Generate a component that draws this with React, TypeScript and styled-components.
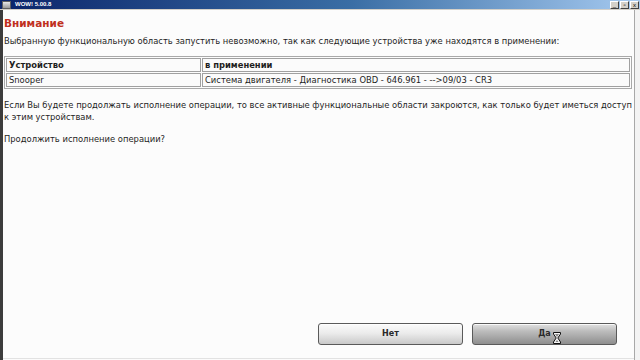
import React from "react";
import styled, { createGlobalStyle } from "styled-components";

const Global = createGlobalStyle`
  html, body { margin: 0; padding: 0; background: #fbfbfb; }
  body { font-family: "DejaVu Sans", Verdana, sans-serif; }
`;

const Window = styled.div`
  width: 640px;
  height: 360px;
  display: flex;
  flex-direction: column;
  overflow: hidden;
  position: relative;
  background: #fbfbfb;
`;

const TitleBar = styled.div`
  height: 9px;
  display: flex;
  align-items: center;
  background: linear-gradient(90deg, #0a246a 0%, #3a6ea5 55%, #a6caf0 100%);
  padding: 0 1px 0 2px;
  border-bottom: 1px solid #d4d0c8;
`;

const AppIcon = styled.div`
  width: 7px;
  height: 6px;
  background: linear-gradient(180deg, #e8e8e8, #9a9a9a);
  border: 1px solid #606060;
  margin-right: 4px;
`;

const Title = styled.span`
  color: #ffffff;
  font-family: "Liberation Sans", Arial, sans-serif;
  font-size: 6px;
  font-weight: bold;
  flex: 1;
  line-height: 9px;
`;

const CaptionButton = styled.div`
  width: 7px;
  height: 6px;
  margin-left: 1px;
  background: #d4d0c8;
  border: 1px solid;
  border-color: #fff #404040 #404040 #fff;
  font-family: "Liberation Sans", Arial, sans-serif;
  font-size: 6px;
  line-height: 6px;
  text-align: center;
  color: #000;
`;

const Main = styled.div`
  flex: 1;
  display: flex;
  min-height: 0;
`;

const LeftFrame = styled.div`
  width: 3px;
  background: #3c3c3c;
`;

const Content = styled.div`
  flex: 1;
  display: flex;
  flex-direction: column;
  padding: 6px 2px 0 1px;
  border-bottom: 1px solid #e2e2e2;
  margin-bottom: 1px;
  background: #fcfcfc;
  color: #1e1e1e;
  font-size: 8.4px;
  line-height: 12px;
`;

const RightFrame = styled.div`
  width: 5px;
  border-left: 1px solid #a8a8a8;
  background: #f3f3f3;
`;

const Heading = styled.div`
  color: #c0301e;
  font-weight: bold;
  font-size: 10.5px;
  line-height: 12px;
  margin-top: 1px;
`;

const Para = styled.p<{ $top: number }>`
  margin: ${(p) => p.$top}px 0 0 0;
`;

const Table = styled.table`
  margin-top: 9px;
  width: 100%;
  border-collapse: separate;
  border-spacing: 1px;
  border: 1px solid #a9a9a9;
  font-size: 8.4px;
`;

const Cell = styled.td<{ $head?: boolean; $w?: string }>`
  border: 1px solid #a0a0a0;
  padding: 0 2px;
  height: 12px;
  line-height: 12px;
  font-weight: ${(p) => (p.$head ? "bold" : "normal")};
  width: ${(p) => p.$w ?? "auto"};
  background: #fbfbfb;
`;

const Spacer = styled.div`
  flex: 1;
`;

const ButtonRow = styled.div`
  display: flex;
  justify-content: flex-end;
  gap: 9px;
  padding: 0 15px 13px 0;
`;

const Button = styled.div<{ $active?: boolean }>`
  width: 143px;
  height: 20px;
  border: 1px solid #5a5a5a;
  border-radius: 3px;
  display: flex;
  align-items: center;
  justify-content: center;
  font-weight: bold;
  font-size: 8px;
  color: #2a2a2a;
  position: relative;
  background: ${(p) =>
    p.$active
      ? "linear-gradient(180deg, #e2e2e2 0%, #bdbdbd 35%, #8e8e8e 100%)"
      : "linear-gradient(180deg, #fafafa 0%, #ececec 45%, #c9c9c9 100%)"};
  box-shadow: inset 0 1px 0 rgba(255, 255, 255, 0.8);
`;

const Cursor = styled.svg`
  position: absolute;
  left: 80px;
  top: 8px;
`;

export default function App() {
  return (
    <>
      <Global />
      <Window>
        <TitleBar>
          <AppIcon />
          <Title>WOW! 5.00.8</Title>
          <CaptionButton>_</CaptionButton>
          <CaptionButton>▫</CaptionButton>
          <CaptionButton>x</CaptionButton>
        </TitleBar>
        <Main>
          <LeftFrame />
          <Content>
            <Heading>Внимание</Heading>
            <Para $top={6}>
              Выбранную функциональную область запустить невозможно, так как
              следующие устройства уже находятся в применении:
            </Para>
            <Table>
              <tbody>
                <tr>
                  <Cell $head $w="189px">Устройство</Cell>
                  <Cell $head>в применении</Cell>
                </tr>
                <tr>
                  <Cell>Snooper</Cell>
                  <Cell>
                    Система двигателя - Диагностика OBD - 646.961 - --&gt;09/03 - CR3
                  </Cell>
                </tr>
              </tbody>
            </Table>
            <Para $top={10}>
              Если Вы будете продолжать исполнение операции, то все активные
              функциональные области закроются, как только будет иметься доступ
              к этим устройствам.
            </Para>
            <Para $top={10}>Продолжить исполнение операции?</Para>
            <Spacer />
            <ButtonRow>
              <Button>Нет</Button>
              <Button $active>
                Да
                <Cursor width="8" height="12" viewBox="0 0 8 12">
                  <path
                    d="M0.5 0.5 H7.5 V2 L4.8 6 L7.5 10 V11.5 H0.5 V10 L3.2 6 L0.5 2 Z"
                    fill="#f4f4f4"
                    stroke="#111"
                    strokeWidth="1"
                  />
                  <path d="M2 2 H6 L4 5 Z M2.5 10 L4 8 L5.5 10 Z" fill="#888" />
                </Cursor>
              </Button>
            </ButtonRow>
          </Content>
          <RightFrame />
        </Main>
      </Window>
    </>
  );
}
